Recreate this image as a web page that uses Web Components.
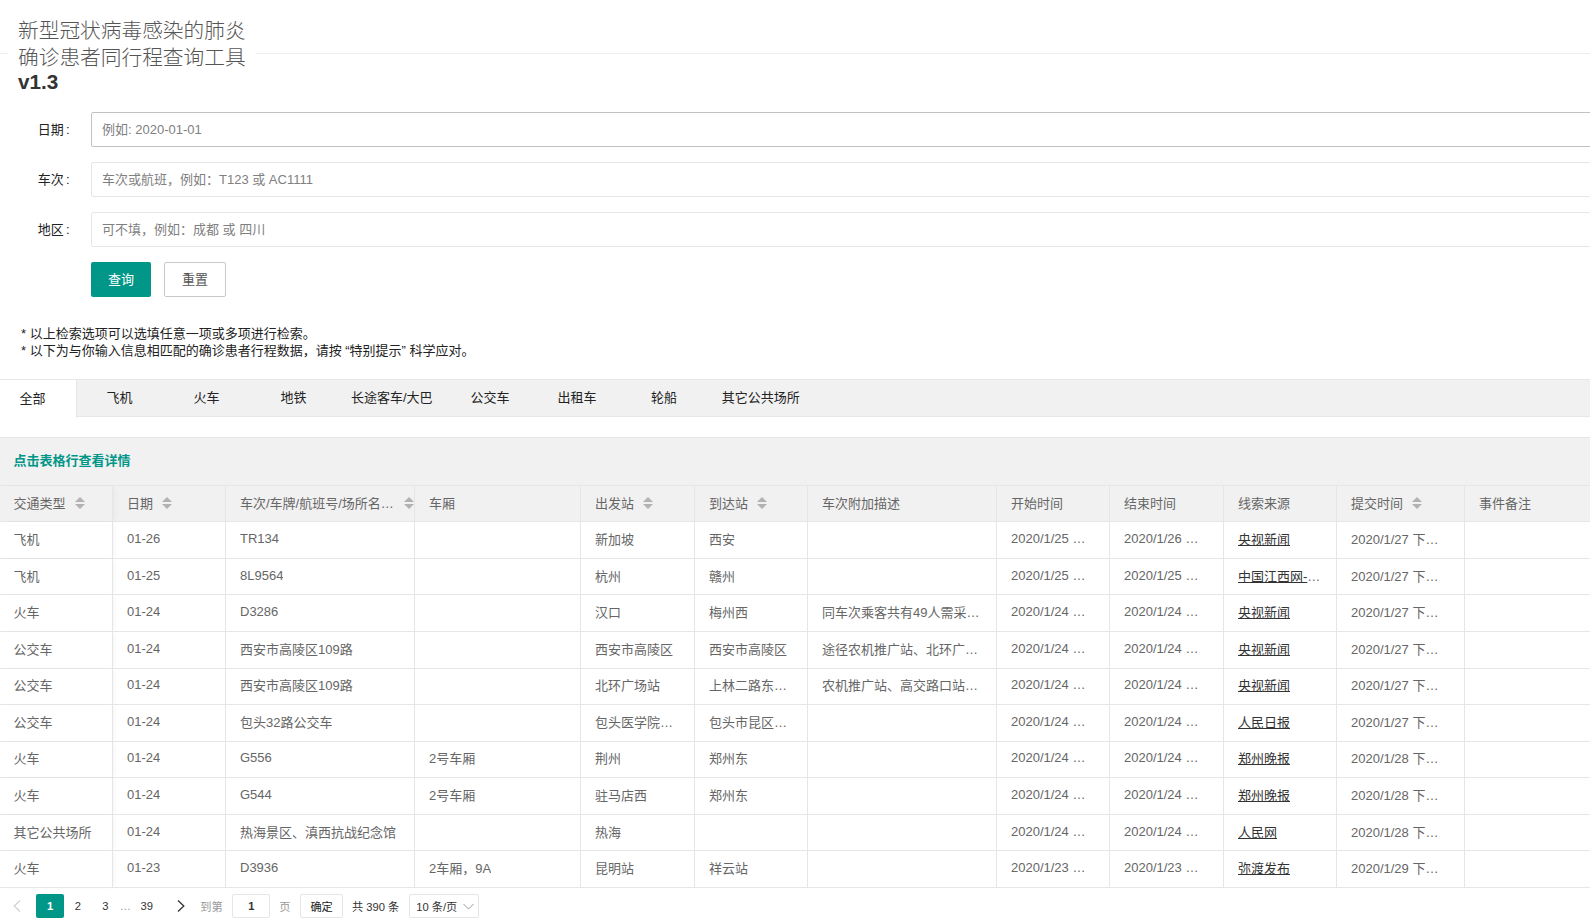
<!DOCTYPE html>
<html lang="zh-CN">
<head>
<meta charset="utf-8">
<title>确诊患者同行程查询工具</title>
<style>
  html, body {
    margin: 0;
    height: 921px;
    overflow: hidden;
    background: #fff;
    color: #666;
    font: 13px "Liberation Sans", "Noto Sans CJK SC", sans-serif;
  }
</style>
</head>
<body>
  <page-title>新型冠状病毒感染的肺炎<br>确诊患者同行程查询工具<b>v1.3</b></page-title>

  <search-form>
    <form-row label="日期" placeholder="例如: 2020-01-01" focused></form-row>
    <form-row label="车次" placeholder="车次或航班，例如：T123 或 AC1111"></form-row>
    <form-row label="地区" placeholder="可不填，例如：成都 或 四川"></form-row>
  </search-form>

  <tip-notes>
    <div>* 以上检索选项可以选填任意一项或多项进行检索。</div>
    <div>* 以下为与你输入信息相匹配的确诊患者行程数据，请按 “特别提示” 科学应对。</div>
  </tip-notes>

  <tab-bar>
    <tab-item active>全部</tab-item>
    <tab-item>飞机</tab-item>
    <tab-item>火车</tab-item>
    <tab-item>地铁</tab-item>
    <tab-item>长途客车/大巴</tab-item>
    <tab-item>公交车</tab-item>
    <tab-item>出租车</tab-item>
    <tab-item>轮船</tab-item>
    <tab-item>其它公共场所</tab-item>
  </tab-bar>

  <data-table></data-table>
  <pager-bar></pager-bar>

<script>
class PageTitle extends HTMLElement {
  constructor() {
    super()
    this.attachShadow({ mode: "open" }).innerHTML = `
      <style>
        :host { display: block; padding-top: 10px; }
        fieldset { margin: 0; padding: 0; border: 0; border-top: 1px solid #eee; }
        legend {
          margin-left: 8px;
          padding: 8px 10px 0;
          font-size: 20.7px;
          line-height: 26.7px;
          font-weight: 300;
          color: #555;
        }
        ::slotted(b) { display: block; margin-top: -2px; color: #333; font-weight: 700; }
      </style>
      <fieldset><legend><slot></slot></legend></fieldset>
    `
  }
}

class SearchForm extends HTMLElement {
  constructor() {
    super()
    this.attachShadow({ mode: "open" }).innerHTML = `
      <style>
        :host { display: block; padding-top: 16.3px; }
        .rows { display: flex; flex-direction: column; gap: 15px; }
        .actions { display: flex; gap: 13px; margin: 15px 0 0 91px; }
        button {
          height: 35px;
          padding: 0 0 2px;
          border-radius: 2px;
          font: inherit;
          box-sizing: border-box;
        }
        .primary { width: 60px; border: 0; background: #009688; color: #fff; }
        .plain { width: 62px; border: 1px solid #c9c9c9; background: #fff; color: #555; }
      </style>
      <div class="rows"><slot></slot></div>
      <div class="actions">
        <button class="primary">查询</button>
        <button class="plain">重置</button>
      </div>
    `
  }
}

class FormRow extends HTMLElement {
  constructor() {
    super()
    this.attachShadow({ mode: "open" })
  }

  connectedCallback() {
    this.shadowRoot.innerHTML = `
      <style>
        :host { display: flex; align-items: center; height: 35px; }
        label { width: 69.5px; padding-bottom: 2px; text-align: right; color: #222; flex: none; }
        label span { margin-left: 2px; }
        input {
          flex: none;
          width: 1560px;
          height: 35px;
          margin-left: 21.5px;
          padding: 0 10px;
          box-sizing: border-box;
          border: 1px solid #e6e6e6;
          border-radius: 2px;
          font: inherit;
          outline: 0;
        }
        input.focused { border-color: #c2c2c2; }
        input::placeholder { color: #808080; }
      </style>
      <label>${this.getAttribute("label")}<span>:</span></label>
      <input class="${this.hasAttribute("focused") ? "focused" : ""}"
             placeholder="${this.getAttribute("placeholder")}">
    `
  }
}

class TipNotes extends HTMLElement {
  constructor() {
    super()
    this.attachShadow({ mode: "open" }).innerHTML = `
      <style>
        :host {
          display: block;
          padding: 28px 0 19.6px 21px;
          line-height: 17px;
          color: #222;
        }
      </style>
      <slot></slot>
    `
  }
}

class TabBar extends HTMLElement {
  constructor() {
    super()
    this.attachShadow({ mode: "open" }).innerHTML = `
      <style>
        :host {
          display: flex;
          height: 38px;
          box-sizing: border-box;
          border-top: 1px solid #e6e6e6;
          border-bottom: 1px solid #e6e6e6;
          background: #f1f1f1;
        }
        .list { display: flex; margin-left: -11px; }
      </style>
      <div class="list"><slot></slot></div>
    `
  }
}

class TabItem extends HTMLElement {
  constructor() {
    super()
    this.attachShadow({ mode: "open" }).innerHTML = `
      <style>
        :host {
          display: flex;
          align-items: center;
          justify-content: center;
          box-sizing: border-box;
          min-width: 87px;
          padding: 0 14px 4px;
          height: 37px;
          color: #222;
        }
        :host([active]) {
          height: 38px;
          background: #fff;
          box-shadow: 1px 0 0 #e6e6e6;
        }
      </style>
      <slot></slot>
    `
  }
}

const COLUMNS = [
  { title: "交通类型", sort: true },
  { title: "日期", sort: true },
  { title: "车次/车牌/航班号/场所名…", sort: true, wide: true },
  { title: "车厢" },
  { title: "出发站", sort: true },
  { title: "到达站", sort: true },
  { title: "车次附加描述" },
  { title: "开始时间" },
  { title: "结束时间" },
  { title: "线索来源" },
  { title: "提交时间", sort: true },
  { title: "事件备注" }
]

const ROWS = [
  ["飞机", "01-26", "TR134", "", "新加坡", "西安", "", "2020/1/25 …", "2020/1/26 …", "央视新闻", "2020/1/27 下…"],
  ["飞机", "01-25", "8L9564", "", "杭州", "赣州", "", "2020/1/25 …", "2020/1/25 …", "中国江西网-", "2020/1/27 下…"],
  ["火车", "01-24", "D3286", "", "汉口", "梅州西", "同车次乘客共有49人需采…", "2020/1/24 …", "2020/1/24 …", "央视新闻", "2020/1/27 下…"],
  ["公交车", "01-24", "西安市高陵区109路", "", "西安市高陵区", "西安市高陵区", "途径农机推广站、北环广…", "2020/1/24 …", "2020/1/24 …", "央视新闻", "2020/1/27 下…"],
  ["公交车", "01-24", "西安市高陵区109路", "", "北环广场站", "上林二路东…", "农机推广站、高交路口站…", "2020/1/24 …", "2020/1/24 …", "央视新闻", "2020/1/27 下…"],
  ["公交车", "01-24", "包头32路公交车", "", "包头医学院…", "包头市昆区…", "", "2020/1/24 …", "2020/1/24 …", "人民日报", "2020/1/27 下…"],
  ["火车", "01-24", "G556", "2号车厢", "荆州", "郑州东", "", "2020/1/24 …", "2020/1/24 …", "郑州晚报", "2020/1/28 下…"],
  ["火车", "01-24", "G544", "2号车厢", "驻马店西", "郑州东", "", "2020/1/24 …", "2020/1/24 …", "郑州晚报", "2020/1/28 下…"],
  ["其它公共场所", "01-24", "热海景区、滇西抗战纪念馆", "", "热海", "", "", "2020/1/24 …", "2020/1/24 …", "人民网", "2020/1/28 下…"],
  ["火车", "01-23", "D3936", "2车厢，9A", "昆明站", "祥云站", "", "2020/1/23 …", "2020/1/23 …", "弥渡发布", "2020/1/29 下…"]
]

const SORT_ICON = `<svg class="sort" width="10" height="12" viewBox="0 0 10 12"><polygon points="5,0 10,5 0,5" fill="#b2b2b2"/><polygon points="0,7 10,7 5,12" fill="#b2b2b2"/></svg>`

class DataTable extends HTMLElement {
  constructor() {
    super()
    this.attachShadow({ mode: "open" })
  }

  connectedCallback() {
    const head = COLUMNS.map((col, i) => `
      <div class="cell th ${i === 0 ? "first" : ""} ${col.wide ? "wide" : ""}">
        <span class="label">${col.title}</span>${col.sort ? SORT_ICON : ""}
      </div>`).join("")

    const body = ROWS.map(row => {
      const cells = row.map((text, i) => {
        if (i === 9) {
          const more = text.endsWith("-") ? "…" : ""
          return `<div class="cell"><span class="text"><a>${text}</a>${more}</span></div>`
        }
        return `<div class="cell ${i === 0 ? "first" : ""}"><span class="text">${text}</span></div>`
      }).join("")
      return cells + `<div class="cell last"></div>`
    }).join("")

    this.shadowRoot.innerHTML = `
      <style>
        :host { display: block; margin-top: 20px; }
        .toolbar {
          display: flex;
          align-items: center;
          height: 48.4px;
          box-sizing: border-box;
          padding: 0 0 4px 13.5px;
          border-top: 1px solid #e6e6e6;
          background: #f1f1f1;
          color: #009688;
          font-weight: 700;
        }
        .grid {
          display: grid;
          grid-template-columns: 112.5px 113px 189px 166px 114px 113px 189px 113px 114px 113px 128px 1fr;
          grid-template-rows: 36px repeat(10, 36.56px);
          border-top: 1px solid #e6e6e6;
          margin-bottom: 0;
        }
        .cell {
          display: flex;
          align-items: center;
          min-width: 0;
          box-sizing: border-box;
          padding: 0 14.5px 3px;
          border-right: 1px solid #e6e6e6;
          border-bottom: 1px solid #e6e6e6;
          background: #fff;
          white-space: nowrap;
        }
        .cell.first {
          padding-left: 13.5px;
          position: relative;
          z-index: 1;
          box-shadow: 3px 0 5px -2px rgba(0, 0, 0, .05);
        }
        .th { background: #f1f1f1; padding-bottom: 2px; }
        .th.wide { padding-right: 0; }
        .th.wide .label { overflow: hidden; }
        .sort { flex: none; margin-left: 9px; }
        .th.wide .sort { margin-left: 11px; }
        .cell:nth-child(12n) { border-right: 0; }
        .text { overflow: hidden; text-overflow: ellipsis; }
        a { color: #333; text-decoration: underline; text-underline-offset: 1px; }
      </style>
      <div class="toolbar">点击表格行查看详情</div>
      <div class="grid">${head}${body}</div>
    `
  }
}

class PagerBar extends HTMLElement {
  constructor() {
    super()
    this.attachShadow({ mode: "open" }).innerHTML = `
      <style>
        :host {
          display: flex;
          align-items: center;
          height: 24.6px;
          margin-top: 6px;
          font-size: 11.2px;
          color: #333;
        }
        .item { display: flex; align-items: center; justify-content: center; flex: none; height: 100%; box-sizing: border-box; }
        .current { background: #009688; color: #fff; border-radius: 2px; font-weight: 700; }
        .muted { color: #999; }
        .box { border: 1px solid #e6e6e6; border-radius: 2px; background: #fff; }
        input {
          width: 100%;
          border: 0;
          padding: 0;
          text-align: center;
          font: inherit;
          font-weight: 700;
          color: #333;
          background: none;
          outline: 0;
        }
        .select { justify-content: flex-start; padding-left: 6px; gap: 6px; }
      </style>
      <div class="item" style="width:36px;padding-right:3px">
        <svg width="8" height="12" viewBox="0 0 8 12"><path d="M7 .5 1.2 6 7 11.5" fill="none" stroke="#d2d2d2" stroke-width="1.3"/></svg>
      </div>
      <div class="item current" style="width:28.3px">1</div>
      <div class="item" style="width:27px">2</div>
      <div class="item" style="width:28px">3</div>
      <div class="item muted" style="width:12px">…</div>
      <div class="item" style="width:31px">39</div>
      <div class="item" style="width:38px">
        <svg width="8" height="12" viewBox="0 0 8 12"><path d="M1 .5 6.8 6 1 11.5" fill="none" stroke="#333" stroke-width="1.3"/></svg>
      </div>
      <div class="item muted" style="width:22.4px">到第</div>
      <div class="item box" style="width:38px;margin-left:9.6px"><input value="1"></div>
      <div class="item muted" style="margin-left:9px">页</div>
      <div class="item box" style="width:42.7px;margin-left:9.8px;color:#222">确定</div>
      <div class="item" style="margin-left:9px">共 390 条</div>
      <div class="item box select" style="width:69.7px;margin-left:10px">
        <span>10 条/页</span>
        <svg width="11" height="7" viewBox="0 0 11 7"><path d="M.5 1 5.5 6l5-5" fill="none" stroke="#999" stroke-width="1"/></svg>
      </div>
    `
  }
}

customElements.define("page-title", PageTitle)
customElements.define("search-form", SearchForm)
customElements.define("form-row", FormRow)
customElements.define("tip-notes", TipNotes)
customElements.define("tab-bar", TabBar)
customElements.define("tab-item", TabItem)
customElements.define("data-table", DataTable)
customElements.define("pager-bar", PagerBar)
</script>
</body>
</html>
